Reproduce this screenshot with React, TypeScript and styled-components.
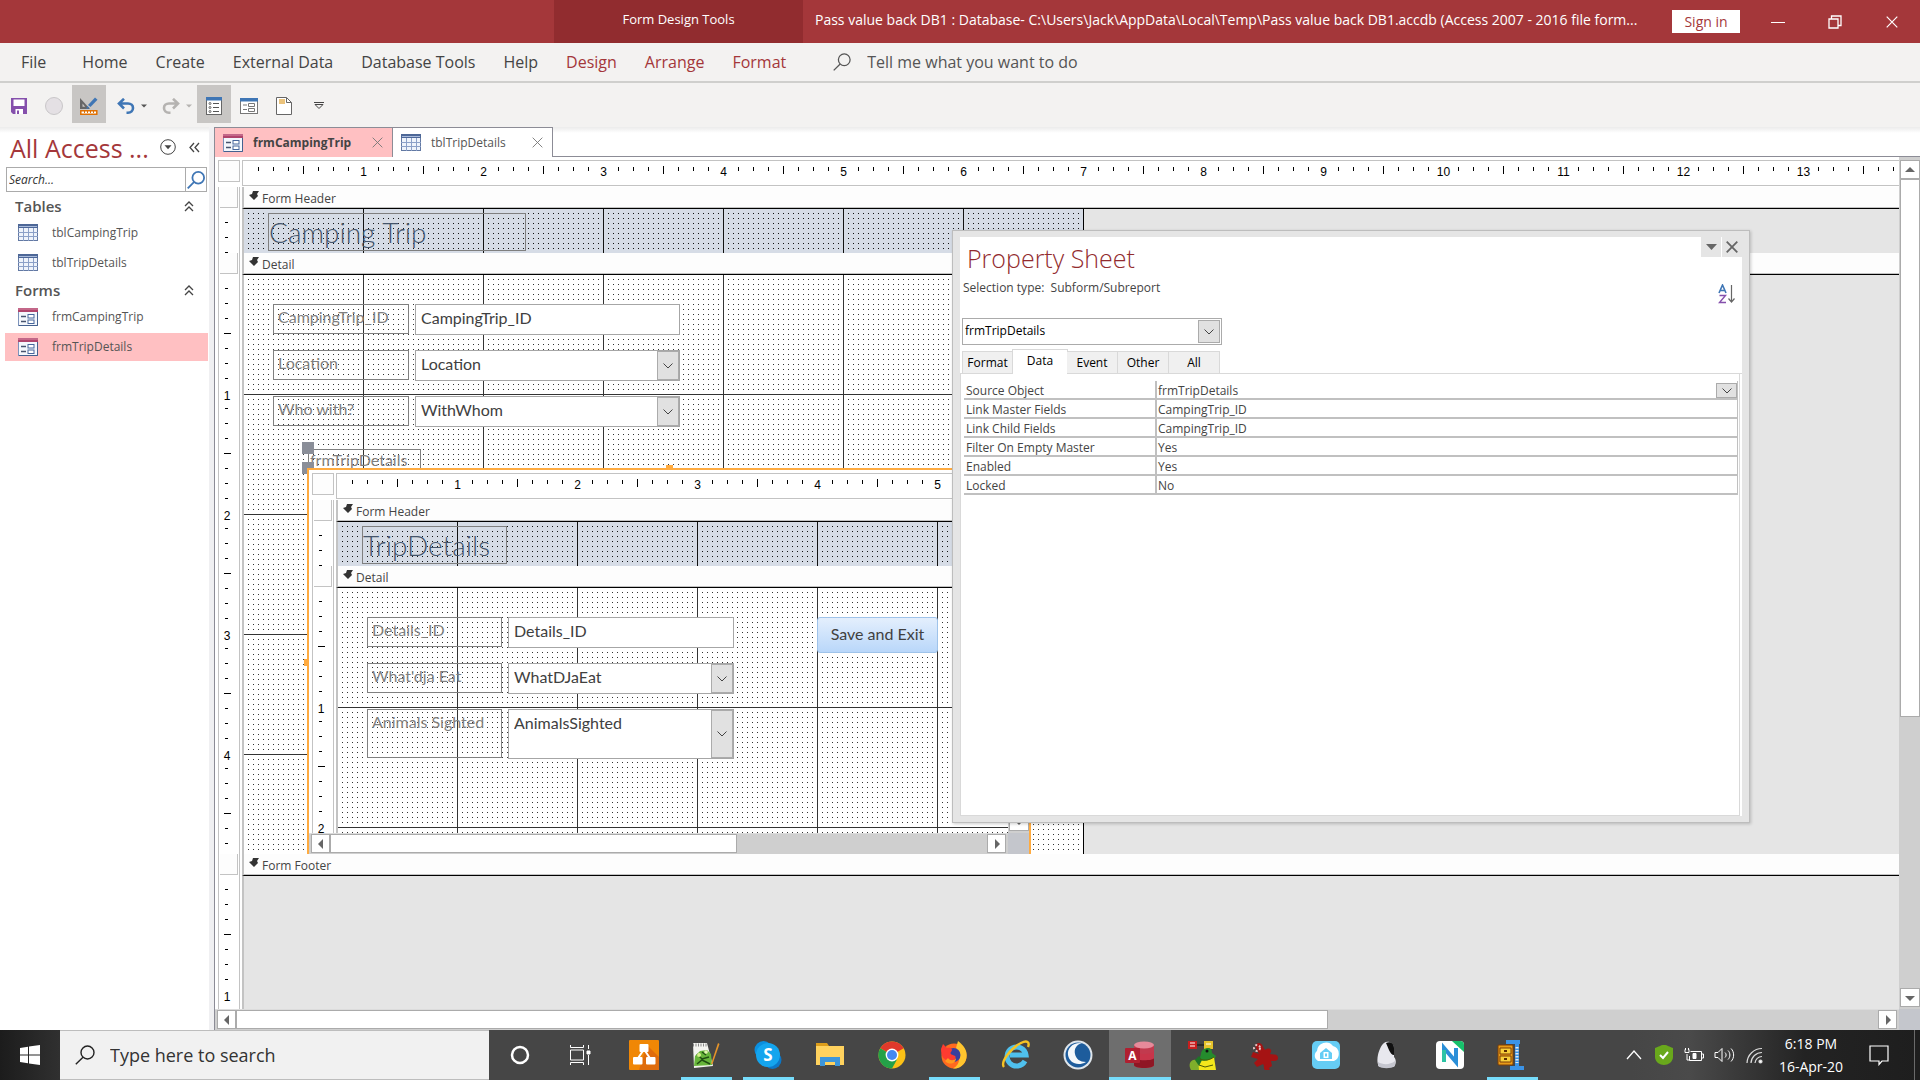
import React from 'react';
import styled, { createGlobalStyle, css } from 'styled-components';

const ui = `"Open Sans", "Noto Sans", sans-serif`;
const formFont = `Lato, "Open Sans", sans-serif`;
const red = '#a4373a';
const pink = '#ffc0c2';
const line = '#c3c3c3';
const frame = '#8c8c96';

const GlobalStyle = createGlobalStyle`
  *, *::before, *::after { box-sizing: border-box; }
  body { margin: 0; font-family: ${ui}; font-size: 12px; color: #444; background: #fff; }
  button, input, select { font: inherit; color: inherit; margin: 0; padding: 0; border: 0; background: none; border-radius: 0; outline: 0; }
  svg { display: block; flex: none; }
  h1, h2, ul { margin: 0; padding: 0; font-weight: 400; list-style: none; }
`;

const Shell = styled.div`
  min-height: 100vh;
  display: flex;
  flex-direction: column;
`;

/* ---------- title bar ---------- */
const TitleBar = styled.header`
  height: 43px;
  display: flex;
  align-items: stretch;
  background: ${red};
  color: #fff;
`;
const TitleSpace = styled.div`
  flex: 0 1 554px;
`;
const ContextTab = styled.div`
  flex: 0 0 249px;
  background: #912c2f;
  font-size: 13px;
  line-height: 38px;
  text-align: center;
`;
const WindowTitle = styled.h1`
  flex: 1;
  min-width: 0;
  padding: 0 12px;
  font-size: 14px;
  line-height: 40px;
  white-space: nowrap;
  overflow: hidden;
`;
const SignIn = styled.button`
  align-self: center;
  width: 68px;
  height: 23px;
  margin-right: 9px;
  background: #fff;
  color: ${red};
  font-size: 14px;
  line-height: 23px;
`;
const WindowButton = styled.button`
  width: 57px;
  display: grid;
  place-items: center;
`;

/* ---------- ribbon ---------- */
const RibbonTabs = styled.nav`
  height: 40px;
  display: flex;
  align-items: center;
  padding: 0 7px;
  background: #f3f2f1;
  border-bottom: 2px solid #cfcfcd;
`;
const RibbonTab = styled.button<{ $context?: boolean; $file?: boolean }>`
  padding: 0 14px;
  margin-right: ${p => (p.$file ? 8 : 0)}px;
  font-size: 16px;
  line-height: 36px;
  white-space: nowrap;
  color: ${p => (p.$context ? red : '#444')};
`;
const TellMe = styled.label`
  display: flex;
  align-items: center;
  gap: 16px;
  flex: 1;
  margin-left: 33px;
  color: #555;
  font-size: 16px;
  input { flex: 1; height: 36px; }
  input::placeholder { color: #555; opacity: 1; }
`;
const QuickBar = styled.div`
  height: 44px;
  display: flex;
  align-items: flex-start;
  gap: 1px;
  padding: 2px;
  background: #f3f2f1;
`;
const QuickButton = styled.button<{ $on?: boolean; $wide?: boolean }>`
  width: ${p => (p.$wide ? 44 : 34)}px;
  height: 38px;
  display: flex;
  align-items: center;
  justify-content: center;
  gap: 6px;
  padding: 4px 0 0 ${p => (p.$wide ? 6 : 0)}px;
  background: ${p => (p.$on ? '#c8c6c4' : 'transparent')};
`;

/* ---------- body ---------- */
const Body = styled.div`
  position: relative;
  flex: 1;
  display: flex;
  background: linear-gradient(#ebebeb, #fff 6px);
`;
const NavPane = styled.aside`
  flex: 0 0 215px;
  border-right: 1px solid ${frame};
  box-shadow: inset -5px 0 0 #f0f0f2;
  padding-right: 6px;
`;
const NavHead = styled.div`
  height: 40px;
  display: flex;
  align-items: center;
  padding: 0 1px 0 10px;
  h2 { flex: 1; font-size: 25px; line-height: 32px; color: ${red}; padding-top: 2px; }
`;
const IconButton = styled.button`
  display: grid;
  place-items: center;
  width: 26px;
  height: 26px;
`;
const NavSearch = styled.div`
  display: flex;
  height: 25px;
  margin: 0 1px 3px 6px;
  border: 1px solid #ababab;
  input { flex: 1; min-width: 0; padding: 0 2px; font-style: italic; }
  input::placeholder { color: #333; opacity: 1; }
  button { width: 21px; border-left: 1px solid #ababab; display: grid; place-items: center; }
`;
const NavGroup = styled.button`
  display: flex;
  align-items: center;
  justify-content: space-between;
  width: 100%;
  height: 22px;
  padding: 0 14px 0 15px;
  font-size: 15px;
  font-weight: 600;
  color: #555;
`;
const NavItem = styled.a<{ $on?: boolean }>`
  display: flex;
  align-items: center;
  gap: 14px;
  height: 28px;
  margin: 2px 0 2px 5px;
  padding: 0 0 1px 13px;
  color: #555;
  text-decoration: none;
  background: ${p => (p.$on ? pink : 'transparent')};
`;

const Main = styled.main`
  flex: 1;
  min-width: 0;
  display: flex;
  flex-direction: column;
`;
const DocTabs = styled.div`
  display: flex;
  height: 30px;
`;
const DocTab = styled.div<{ $on?: boolean }>`
  display: flex;
  align-items: center;
  width: ${p => (p.$on ? 178 : 160)}px;
  padding: 0 8px;
  background: ${p => (p.$on ? pink : '#fff')};
  border-top: 1px solid ${frame};
  border-right: 1px solid ${frame};
  font-weight: ${p => (p.$on ? 700 : 400)};
  color: ${p => (p.$on ? '#444' : '#555')};
  span { flex: 1; padding-left: 10px; }
  button { width: 14px; height: 14px; display: grid; place-items: center; }
`;
const DocTabsRest = styled.div`
  flex: 1;
  border-bottom: 1px solid ${frame};
`;

/* ---------- design surface ---------- */
const Workspace = styled.div`
  flex: 1;
  min-height: 0;
  display: grid;
  grid-template-columns: minmax(0, 1fr) 21px;
  grid-template-rows: minmax(0, 1fr) 21px;
  background: #fff;
`;
const Surface = styled.div`
  display: flex;
  flex-direction: column;
  padding: 3px 0 0 3px;
  min-width: 0;
`;
const RulerRow = styled.div`
  display: flex;
  height: 27px;
`;
const Corner = styled.div`
  width: 22px;
  height: 22px;
  margin-right: 2px;
  flex: none;
  border: 1px solid ${line};
  background: #fdfdfd;
`;
const HRuler = styled.div`
  flex: 1;
  height: 26px;
  display: flex;
  padding-left: 8px;
  border: solid ${line};
  border-width: 1px 0 1px 1px;
  overflow: hidden;
  color: #000;
`;
const HTick = styled.i<{ $long: boolean }>`
  flex: 0 0 1px;
  height: ${p => (p.$long ? 8 : 4)}px;
  margin: ${p => (p.$long ? 5 : 6)}px 7px 0;
  background: #000;
`;
const HNumber = styled.span`
  flex: 0 0 15px;
  padding-top: 4px;
  text-align: center;
  font: 12px/14px "Liberation Sans", sans-serif;
`;
const SectionRow = styled.div<{ $grow?: boolean }>`
  display: flex;
  flex: ${p => (p.$grow ? '1 1 0' : '0 0 auto')};
  min-height: 0;
`;
const Gutter = styled.div`
  flex: 0 0 22px;
  contain: size;
  overflow: hidden;
  margin-right: 2px;
  border: solid ${line};
  border-width: 0 1px;
  color: #000;
`;
const VTicks = styled.div`
  display: flex;
  flex-direction: column;
  padding-top: 6px;
`;
const VTick = styled.i<{ $long: boolean }>`
  flex: 0 0 1px;
  width: ${p => (p.$long ? 7 : 3)}px;
  margin: 7px 0 7px ${p => (p.$long ? 5 : 6)}px;
  background: #000;
`;
const VNumber = styled.span`
  flex: 0 0 15px;
  min-height: 0;
  width: 16px;
  text-align: center;
  font: 12px/21px "Liberation Sans", sans-serif;
`;
const Selector = styled.button`
  display: block;
  width: 18px;
  height: 21px;
  margin-left: 1px;
  border: solid ${line};
  border-width: 0 1px 1px 0;
  background: #fdfdfd;
`;
const SectionBar = styled.div`
  flex: 1;
  display: flex;
  height: 22px;
  gap: 3px;
  padding: 4px 5px 0;
  border-left: 2px solid ${line};
  border-bottom: 1px solid #000;
  box-shadow: inset 0 -1px 0 ${line};
  background: #fdfdfd;
  line-height: 16px;
`;
const Canvas = styled.div`
  flex: 1;
  min-width: 0;
  overflow: hidden;
  border-left: 2px solid ${line};
  background: #e5e5e5;
`;
const Page = styled.div<{ $height: number; $header?: boolean }>`
  ${p => {
    const paper = p.$header ? '#d6dce6' : '#fff';
    const ink = p.$header ? '#111' : '#333';
    return css`
      background:
        linear-gradient(90deg, ${ink} 1px, transparent 1px) -1px -1px / 120px 120px,
        linear-gradient(${ink} 1px, transparent 1px) -1px -1px / 120px 120px,
        linear-gradient(transparent 1px, ${paper} 1px) -1px -1px / 5px 5px,
        linear-gradient(90deg, ${ink} 1px, ${paper} 1px) -1px -1px / 5px 5px;
    `;
  }}
  position: relative;
  width: 840px;
  height: ${p => p.$height}px;
  border-right: 1px solid #000;
`;

type Box = { $x: number; $y: number; $w: number; $h: number };
const placed = css<Box>`
  position: absolute;
  left: ${p => p.$x}px;
  top: ${p => p.$y}px;
  width: ${p => p.$w}px;
  height: ${p => p.$h}px;
`;
const FormTitle = styled.h2<Box>`
  ${placed}
  border: 1px solid #7f7f7f;
  color: #44546a;
  font: 300 28px/36px ${formFont};
  white-space: nowrap;
`;
const FieldLabel = styled.label<Box & { $tight?: boolean }>`
  ${placed}
  padding-left: ${p => (p.$tight ? 1 : 4)}px;
  border: 1px solid #7f7f7f;
  color: #7f7f7f;
  font: 16px/${p => (p.$tight ? 20 : 24)}px ${formFont};
  white-space: nowrap;
`;
const FieldBox = styled.div<Box>`
  ${placed}
  display: flex;
  border: 1px solid #a6a6a6;
  background: #fff;
  color: #404040;
  font: 16px/20px ${formFont};
  input, select { appearance: none; flex: 1; min-width: 0; height: 26px; padding: 0 5px; }
  input { padding-bottom: 1px; }
`;
const DropArrow = styled.span`
  flex: 0 0 22px;
  display: grid;
  place-items: center;
  background: #e1e1e1;
  border: 1px solid #ababab;
  pointer-events: none;
`;
const CommandButton = styled.button<Box>`
  ${placed}
  padding-bottom: 2px;
  border: 1px solid #9fc3ea;
  border-radius: 3px;
  background: linear-gradient(#e4effd, #b9d7fa);
  color: #404040;
  font: 16px/30px ${formFont};
`;
const SubformFrame = styled.div<Box>`
  ${placed}
  display: flex;
  flex-direction: column;
  border: 2px solid #ffab40;
  border-bottom: 0;
`;
const Handle = styled.i<Box & { $gray?: boolean }>`
  ${placed}
  background: ${p => (p.$gray ? '#8a8e98' : '#ffab40')};
`;

/* ---------- scroll bars ---------- */
const ScrollBar = styled.div<{ $vertical?: boolean }>`
  display: flex;
  flex-direction: ${p => (p.$vertical ? 'column' : 'row')};
  padding: ${p => (p.$vertical ? '3px 0 2px 1px' : '0 2px 1px')};
  background: #cfcfcf;
  border: solid #dcdcdc;
  border-width: ${p => (p.$vertical ? '0' : '1px 0 0')};
`;
const ScrollButton = styled.button`
  flex: 0 0 19px;
  min-height: 18px;
  display: grid;
  place-items: center;
  background: #fff;
  border: 1px solid #ababab;
`;
const ScrollTrack = styled.div<{ $vertical?: boolean; $size: number }>`
  flex: 1;
  min-height: 0;
  > div {
    width: ${p => (p.$vertical ? '100%' : p.$size + '%')};
    height: ${p => (p.$vertical ? p.$size + '%' : '100%')};
    background: #fff;
    border: 1px solid #ababab;
  }
`;
const ScrollCorner = styled.div`
  background: #c4c6cc;
`;

/* ---------- property sheet ---------- */
const Sheet = styled.section`
  position: absolute;
  left: 952px;
  top: 103px;
  width: 798px;
  height: 593px;
  padding: 6px 7px;
  display: flex;
  border: 1px solid #bdbdbd;
  background: #e5e5e5;
  box-shadow: 1px 1px 3px #0003;
`;
const SheetBody = styled.div`
  flex: 1;
  display: flex;
  flex-direction: column;
  background: #fff;
`;
const SheetHead = styled.div`
  display: flex;
  height: 40px;
  padding-left: 7px;
  gap: 1px;
  h2 { flex: 1; font-size: 25px; font-weight: 300; line-height: 42px; color: #922b2e; }
  button { width: 20px; height: 20px; display: grid; place-items: center; background: #e5e5e5; }
`;
const SheetType = styled.div`
  display: flex;
  justify-content: space-between;
  height: 40px;
  padding: 1px 6px 0 3px;
  line-height: 20px;
  white-space: pre;
  button { height: 20px; margin-top: 6px; }
`;
const SheetSelect = styled.div`
  display: flex;
  flex: none;
  width: 260px;
  height: 27px;
  margin: 1px 0 4px 2px;
  padding: 1px;
  border: 1px solid #ababab;
  color: #000;
  select { appearance: none; flex: 1; padding: 0 1px 2px; }
`;
const SheetTabs = styled.div`
  display: flex;
  align-items: flex-end;
  flex: none;
  height: 25px;
  padding-left: 2px;
  border-bottom: 1px solid #d9d9d9;
`;
const SheetTab = styled.button<{ $on?: boolean }>`
  width: ${p => (p.$on ? 56 : 51)}px;
  height: ${p => (p.$on ? 25 : 22)}px;
  margin: ${p => (p.$on ? '0 -1px -1px' : '0')};
  padding-bottom: ${p => (p.$on ? 3 : 0)}px;
  border: 1px solid #d9d9d9;
  border-width: ${p => (p.$on ? '1px 1px 0' : '1px 1px 0 0')};
  background: ${p => (p.$on ? '#fff' : '#f0f0f0')};
  color: #000;
  position: relative;
  &:first-child { border-left-width: 1px; }
`;
const SheetPanel = styled.div`
  flex: 1;
  margin-right: 2px;
  padding: 7px 1px 0 3px;
  border: 1px solid #d9d9d9;
  border-top: 0;
`;
const PropTable = styled.table`
  width: 100%;
  border-collapse: separate;
  border-spacing: 0;
  border-right: 1px solid #c0c0c0;
  line-height: 15px;
  th, td { height: 19px; padding: 2px 0 0 2px; text-align: left; font-weight: 400; border-bottom: 2px solid #c0c0c0; }
  th { width: 193px; border-right: 2px solid #c0c0c0; }
  td { padding-left: 1px; }
  td > div { display: flex; justify-content: space-between; }
`;
const CellDrop = styled.button`
  width: 21px;
  height: 15px;
  display: grid;
  place-items: center;
  background: #e1e1e1;
  border: 1px solid #ababab;
`;

/* ---------- task bar ---------- */
const TaskBar = styled.footer`
  height: 50px;
  display: flex;
  background: linear-gradient(90deg, #464646 85%, #4a4a4a 88%, #232323 94%, #1e1e1e);
  color: #fff;
`;
const Start = styled.button`
  width: 60px;
  display: grid;
  place-items: center;
  background: linear-gradient(90deg, #1c1c1c, #303030);
`;
const TaskSearch = styled.label`
  flex: 0 0 429px;
  display: flex;
  align-items: center;
  gap: 15px;
  padding-left: 15px;
  background: #f1f1f1;
  border: solid #bdbdbd;
  border-width: 1px 0;
  color: #222;
  font-size: 18px;
  input { flex: 1; height: 40px; }
  input::placeholder { color: #333; opacity: 1; }
`;
const TaskButton = styled.button<{ $running?: boolean; $active?: boolean }>`
  position: relative;
  flex: 0 0 62px;
  display: grid;
  place-items: center;
  background: ${p => (p.$active ? '#6e6e6e' : 'transparent')};
  &::after {
    content: '';
    display: ${p => (p.$running || p.$active ? 'block' : 'none')};
    position: absolute;
    bottom: 0;
    left: ${p => (p.$active ? 0 : 6)}px;
    right: ${p => (p.$active ? 0 : 5)}px;
    height: 3px;
    background: #76dcfb;
  }
`;
const Tray = styled.div`
  margin-left: auto;
  display: flex;
  align-items: center;
  padding-right: 5px;
`;
const TrayButton = styled.button`
  width: 30px;
  height: 50px;
  display: grid;
  place-items: center;
`;
const Clock = styled.time`
  width: 84px;
  text-align: center;
  font-size: 14px;
  line-height: 23px;
  white-space: pre-line;
`;
const NoticeButton = styled(TrayButton)`
  width: 61px;
  padding-right: 9px;
`;
const PeekEdge = styled.div`
  width: 1px;
  align-self: stretch;
  background: #6a6a6a;
`;

/* ---------- small drawings ---------- */
const Caret = ({ fill = '#555' }) => (
  <svg width="6" height="4" viewBox="0 0 8 4"><path d="M0 0h8L4 4z" fill={fill} /></svg>
);
const Chevron = () => (
  <svg width="10" height="6" viewBox="0 0 10 6" fill="none" stroke="#444"><path d="M.5.5 5 5 9.500.5" /></svg>
);
const Triangle = ({ turn = 0 }) => (
  <svg width="10" height="10" viewBox="0 0 10 10"><path d="M0 7h10L5 2z" fill="#666" transform={`rotate(${turn} 5 5)`} /></svg>
);
const Cross = ({ size = 12, color = '#777', w = 1 }) => (
  <svg width={size} height={size} viewBox="0 0 12 12" fill="none" stroke={color} strokeWidth={w}><path d="m.7.7 10.600 10.600M11.300.7.7 11.300" /></svg>
);
const Lens = ({ size = 20, color = '#444', w = 1.4 }) => (
  <svg width={size} height={size} viewBox="0 0 20 20" fill="none" stroke={color} strokeWidth={w}><circle cx="12.500" cy="7.500" r="6.500" /><path d="M8 12.200.8 19.300" /></svg>
);
const FormGlyph = () => (
  <svg width="20" height="18" viewBox="0 0 20 18">
    <rect x=".5" y=".5" width="19" height="17" fill="#f4f7fc" stroke="#7d93bb" />
    <path d="M19.500 3v14.500H1" fill="none" stroke="#44618f" />
    <rect width="20" height="4" fill="#b0446c" /><path d="M0 1h20" stroke="#d78ba6" />
    <path d="M3 8.500h5M3 13.500h5" stroke="#46536e" strokeWidth="1.500" />
    <rect x="10" y="6.500" width="6" height="3.500" fill="#fff" stroke="#46669c" /><rect x="10" y="12" width="6" height="3.500" fill="#fff" stroke="#46669c" />
  </svg>
);
const TableGlyph = () => (
  <svg width="20" height="17" viewBox="0 0 20 17">
    <rect x=".5" y=".5" width="19" height="16" fill="#eef3fb" stroke="#6379a3" />
    <rect width="20" height="4" fill="#4d6797" /><path d="M1 2.500h18" stroke="#a9bbdc" />
    <path d="M0 8.500h20M0 12.500h20M5.500 4v13M10.500 4v13M15.500 4v13" stroke="#8ba0c8" />
  </svg>
);
const DoubleUp = () => (
  <svg width="10" height="11" viewBox="0 0 10 11" fill="none" stroke="#444" strokeWidth="1.300"><path d="M1 5l4-4 4 4M1 10l4-4 4 4" /></svg>
);
const Marker = () => (
  <svg width="10" height="9" viewBox="0 0 10 9"><path d="M4 0h6L8 3l1 2-4 4-5-5 3-1z" fill="#333" /></svg>
);

const SaveIcon = () => (
  <svg width="16" height="16" viewBox="0 0 16 16"><path d="M0 0h16v16H2l-2-2z" fill="#8550ac" /><path d="M2.500 1.500h11V8h-11zM4.500 11h7.500v5H4.500z" fill="#fff" /><path d="M6 12.500h2V16H6z" fill="#8550ac" /></svg>
);
const CircleIcon = () => (
  <svg width="18" height="18" viewBox="0 0 18 18"><circle cx="9" cy="9" r="8.500" fill="#e4e0e4" stroke="#c8c6c8" /></svg>
);
const DesignIcon = () => (
  <svg width="18" height="18" viewBox="0 0 18 18">
    <path d="M0 1v11h10z" fill="#666" /><path d="M2.500 6.500v3.200h2.700z" fill="#c8c6c4" />
    <path d="m8 8 7-7.500 2.500 2.200L10.500 10z" fill="#3f76b5" /><path d="m7.300 9 2.300 2-3.300 1z" fill="#3f76b5" />
    <path d="M.8 13.800h16v3.500H.8z" fill="#fff" stroke="#e07000" strokeWidth="1.500" /><path d="M4.500 14v2M7.500 14v2M10.500 14v2M13.500 14v2" stroke="#e07000" />
  </svg>
);
const UndoIcon = ({ flip = false, color = '#3f76b5' }) => (
  <svg width="18" height="16" viewBox="0 0 18 16" fill="none" stroke={color} strokeWidth="2.600">
    <g transform={flip ? 'translate(18 0) scale(-1 1)' : undefined}><path d="M7 .8 2 5.500 7 10.500M2.500 5.500H11c3 0 5 2 5 4.500s-2 4.700-5 4.700H9.500" /></g>
  </svg>
);
const PropIcon = () => (
  <svg width="16" height="18" viewBox="0 0 16 18"><rect x=".5" y=".5" width="15" height="17" fill="#fff" stroke="#666" /><path d="M0 0h16v3.500H0z" fill="#3f76b5" />
    <path d="M7 6.500h6M7 10.500h6M7 14.500h6" stroke="#555" /><g fill="none" stroke="#666"><circle cx="4" cy="6.500" r="1" /><circle cx="4" cy="10.500" r="1" /><circle cx="4" cy="14.500" r="1" /></g></svg>
);
const FormViewIcon = () => (
  <svg width="18" height="16" viewBox="0 0 18 16"><rect x=".5" y=".5" width="17" height="15" fill="#fff" stroke="#777" /><path d="M0 0h18v3.500H0z" fill="#3f76b5" />
    <path d="M3 7h4M3 11.500h4" stroke="#777" /><path d="M8.500 5.500h6v3h-6zM8.500 10.500h6v3h-6z" fill="none" stroke="#777" /></svg>
);
const PageIcon = () => (
  <svg width="16" height="18" viewBox="0 0 16 18"><path d="M.5.5h10l5 5v12H.5z" fill="#fff" stroke="#666" /><path d="M3 2h6v5H3z" fill="#ebc37c" /><path d="M10.500.5v5h5" fill="none" stroke="#666" /></svg>
);

/* 30 x 30 task bar pictures */
const pictures: Record<string, React.ReactNode> = {
  Cortana: <circle cx="15" cy="15" r="8" fill="none" stroke="#fff" strokeWidth="2.500" />,
  'Task View': <g fill="none" stroke="#fff"><path d="M3.500 10h13v10h-13zM3.500 5v2.500h13V5M3.500 25v-2.500h13V25M21.500 5v4M21.500 15v10" /><path d="M20 11h3v3h-3z" fill="#fff" /></g>,
  'draw.io': <g><rect width="30" height="30" rx="1" fill="#f08705" /><path d="M18 5l12 12v13H10z" fill="#df6c0c" /><path d="m14.500 10-6 9m7-9 6 9" stroke="#fff" strokeWidth="2" /><g fill="#fff"><rect x="10.500" y="4" width="9" height="8" rx="1" /><rect x="4" y="17" width="9.500" height="7.500" rx="1" /><rect x="17" y="17" width="9.500" height="7.500" rx="1" /></g></g>,
  'Notepad++': <g><path d="M2 3h14l6 23-19 2z" fill="#f4f4f0" /><path d="M2 5h14" stroke="#888" strokeWidth="3" strokeDasharray="1 1.500" /><path d="M3 26l1-10 5-5 7-1 4 4 1 11z" fill="#67b53a" /><path d="M6 14l5 5 7-2M6 24l5-4 8 4M11 12l4 3" stroke="#204d12" strokeWidth="1.500" fill="none" /><circle cx="8" cy="15" r="2" fill="#d5f08c" /><circle cx="15" cy="12" r="1.800" fill="#e4f5b0" /><path d="m20 24 7-21 1.500 1-7 20z" fill="#e69429" /></g>,
  Skype: <g><circle cx="10.500" cy="10" r="9" fill="#0a8fdf" /><circle cx="19.500" cy="20" r="9" fill="#0c77c7" /><circle cx="15" cy="15" r="12" fill="#14a5ee" /><text x="15" y="21" textAnchor="middle" fill="#fff" fontSize="17" fontWeight="700" fontFamily="Open Sans">S</text></g>,
  'File Explorer': <g><path d="M1 3h11l2 3H1z" fill="#dc9d1b" /><path d="M1 6h28v19H1z" fill="#ffd25e" /><path d="M5 17h20v9h-5v-4h-10v4H5z" fill="#3d96da" /></g>,
  Chrome: <g><circle cx="15" cy="15" r="13.500" fill="#fbc116" /><path d="M15 15 3.300 8.200A13.500 13.500 0 0 1 26.700 8.200z" fill="#e0392b" /><path d="M15 15 3.300 8.200A13.500 13.500 0 0 0 15 28.500l5-9z" fill="#24a148" /><circle cx="15" cy="15" r="6.400" fill="#fff" /><circle cx="15" cy="15" r="5" fill="#4688f1" /></g>,
  Firefox: <g><circle cx="15" cy="16" r="12.500" fill="#ff6a1f" /><path d="M19 1c5 4 10 9 8.500 17S19 29 14 28.500C22 25 22 13 17 8z" fill="#ffc52e" /><circle cx="14.500" cy="15" r="7" fill="#3a3f9e" /><path d="M2 9 4 4l4 4c5-1 6 2 4 4s2 3 4 4-1 6-6 5S2 17 2 9z" fill="#ff3b30" /><path d="M9 18c2 3 6 3 8 0 0 5-6 8-11 3z" fill="#ff9a1f" /></g>,
  'Internet Explorer': <g><path d="M24 21a9.500 9.500 0 1 1 1-6H9" fill="none" stroke="#4fc1ee" strokeWidth="5" /><path d="M3 27C-1 22 10 8 20 3c6-3 9-1 7 4" fill="none" stroke="#f5c324" strokeWidth="2.400" /></g>,
  Browser: <g><circle cx="15" cy="15" r="14.500" fill="#dfe6ec" /><circle cx="15" cy="15" r="12.500" fill="#1d5c9c" /><path d="M19 3C10 2 4 8 5 15s9 12 18 7c-6 0-10-3-11-8S13 5 19 3z" fill="#f4f8fb" /></g>,
  Access: <g><path d="M9 5v20c0 4 20 4 20 0V5z" fill="#c23a4e" /><path d="M9 18v7c0 4 20 4 20 0v-7c0 3-20 3-20 0z" fill="#8f1624" /><ellipse cx="19" cy="5" rx="10" ry="3.500" fill="#e78a9a" /><path d="M9 11c0 4 20 4 20 0v6c0 4-20 4-20 0z" fill="#c8354a" /><rect x="0" y="8" width="15" height="15" rx="1" fill="#b01f30" /><text x="7.500" y="20" textAnchor="middle" fill="#fff" fontSize="12" fontWeight="700" fontFamily="Open Sans">A</text></g>,
  Frog: <g><path d="M1 1h9v8H1z" fill="#c81e1e" /><path d="M17 1h9v8h-9z" fill="#e6c32c" /><path d="M3 3h5M3 6h5M19 4h5" stroke="#fff" /><path d="M10 5h7" stroke="#111" /><path d="M14 14c0-4 4-6 7-6s4 2 4 5l4 3-3 5H12z" fill="#258b2d" /><path d="M4 30c-4-6 1-13 7-9l3 9z" fill="#7fae2b" /><path d="M11 19c5 3 11 2 16-2l2 13H12z" fill="#f3e71c" /><path d="M8 20l4-4 3 4-3 6z" fill="#1d7426" /><path d="M13 19c5 2 10 1 14-2M12 25l6 2 8-2" stroke="#4a5a08" fill="none" /><circle cx="20" cy="11" r="1.500" fill="#111" /></g>,
  Puzzle: <g><path d="M7 8c-2-6 6-7 7-1l2 3c4-3 7-1 6 2l-1 2c2 1 8-1 8 4 0 4-6 3-7 3l1 5-3 2 1 2c-3 3-7 0-6-4l-1-2-6 3-3-4 4-4-7-2 2-5 6 2z" fill="#a51313" /><circle cx="8" cy="8" r="3" fill="none" stroke="#e8c4c4" strokeWidth="2" strokeDasharray="2 2" /></g>,
  Cloud: <g><rect x="1" y="1" width="28" height="28" rx="5" fill="#66cdf5" /><path d="M7 21a6 6 0 0 1-1-10 9 9 0 0 1 16-5 8 8 0 0 1 1 15z" fill="#fff" /><path d="m9 13 6-5 6 5v6H9z" fill="#66cdf5" /><path d="M12.500 12h5v6h-5z" fill="#fff" /><path d="M14 13.500h2v3h-2z" fill="#66cdf5" /></g>,
  Camera: <g><path d="M7 27C2 24 5 8 11 3c4-3 10 0 10 5v9c3 3 2 9-1 10z" fill="#e8e8ee" /><path d="M13 3c5-2 8 1 8 5v7c-4 0-6-8-8-12z" fill="#111" /><path d="M5 22c5 3 12 3 17-1v5c-4 3-13 3-17 0z" fill="#c5c6cf" /></g>,
  Nox: <g><rect x="1" y="1" width="28" height="28" rx="4" fill="#fff" /><path d="M17 1h8a4 4 0 0 1 4 4v7z" fill="#17c06b" /><path d="M9 22V8l12 14V8" fill="none" stroke="#2a8fd8" strokeWidth="4" /><path d="M9 22V10" stroke="#2dc4a5" strokeWidth="4" /></g>,
  Archive: <g><rect x="1" y="5" width="15" height="20" rx="1" fill="#e89b18" stroke="#7a3c06" /><path d="M3 8h11v6H3zM3 16h11v6H3z" fill="#f8cf3b" stroke="#7a3c06" /><path d="M7 11h3M7 19h3" stroke="#5a2c00" strokeWidth="2" /><path d="M9 2h14M13 28h14M20 3v24" stroke="#3b93e6" strokeWidth="4" /><path d="M20 7v16" stroke="#dfe8f2" strokeWidth="3" strokeDasharray="1.500 1.500" /></g>,
};
const running = ['Notepad++', 'Skype', 'Firefox', 'Archive'];

/* ---------- composed parts ---------- */
const range = (count: number) => Array.from({ length: count }, (_, i) => i + 1);

type SectionProps = { title: string; ticks: number; height?: number; header?: boolean; grow?: boolean; children?: React.ReactNode };
const Section = ({ title, ticks, height, header, grow, children }: SectionProps) => (
  <>
    <SectionRow>
      <Gutter><Selector aria-label={`Select ${title}`} /></Gutter>
      <SectionBar><Marker />{title}</SectionBar>
    </SectionRow>
    <SectionRow $grow={grow}>
      <Gutter>
        <VTicks aria-hidden="true">
          {range(ticks).map(k =>
            k % 8 === 0 ? <VNumber key={k}>{k / 8}</VNumber> : <VTick key={k} $long={k % 8 === 4} />)}
        </VTicks>
      </Gutter>
      <Canvas>{height ? <Page $height={height} $header={header}>{children}</Page> : null}</Canvas>
    </SectionRow>
  </>
);

const Scroll = ({ vertical, size }: { vertical?: boolean; size: number }) => (
  <ScrollBar $vertical={vertical}>
    <ScrollButton aria-label={vertical ? 'Scroll up' : 'Scroll left'}><Triangle turn={vertical ? 0 : -90} /></ScrollButton>
    <ScrollTrack $vertical={vertical} $size={size}><div /></ScrollTrack>
    <ScrollButton aria-label={vertical ? 'Scroll down' : 'Scroll right'}><Triangle turn={vertical ? 180 : 90} /></ScrollButton>
  </ScrollBar>
);

const Designer = ({ h, v, ticks, children }: { h: number; v: number; ticks: number; children: React.ReactNode }) => (
  <Workspace>
    <Surface>
      <RulerRow>
        <Corner />
        <HRuler aria-hidden="true">
          {range(ticks).map(k =>
            k % 8 === 0 ? <HNumber key={k}>{k / 8}</HNumber> : <HTick key={k} $long={k % 8 === 4} />)}
        </HRuler>
      </RulerRow>
      {children}
    </Surface>
    <Scroll vertical size={v} />
    <Scroll size={h} />
    <ScrollCorner />
  </Workspace>
);

type FieldProps = { id: string; label: string; value: string; y: number; labelW: number; x: number; w: number; tall?: boolean; combo?: boolean };
const Field = ({ id, label, value, y, labelW, x, w, tall, combo }: FieldProps) => (
  <>
    <FieldLabel htmlFor={id} $x={29} $y={y} $w={labelW} $h={tall ? 49 : 30}>{label}</FieldLabel>
    <FieldBox $x={x} $y={y} $w={w} $h={tall ? 50 : 31}>
      {combo
        ? <><select id={id}><option>{value}</option></select><DropArrow><Chevron /></DropArrow></>
        : <input id={id} defaultValue={value} />}
    </FieldBox>
  </>
);

const ribbon = ['File', 'Home', 'Create', 'External Data', 'Database Tools', 'Help', 'Design', 'Arrange', 'Format'];
const properties = [
  ['Source Object', 'frmTripDetails'],
  ['Link Master Fields', 'CampingTrip_ID'],
  ['Link Child Fields', 'CampingTrip_ID'],
  ['Filter On Empty Master', 'Yes'],
  ['Enabled', 'Yes'],
  ['Locked', 'No'],
];

const Subform = () => (
  <SubformFrame $x={63} $y={193} $w={724} $h={386}>
    <Designer h={62} v={60} ticks={44}>
      <Section title="Form Header" ticks={3} height={44} header>
        <FormTitle $x={24} $y={4} $w={145} $h={38}>TripDetails</FormTitle>
      </Section>
      <Section title="Detail" ticks={16} height={245} grow>
        <Field id="details" label="Details_ID" value="Details_ID" y={29} labelW={135} x={170} w={226} />
        <Field id="eat" label="What'dja Eat" value="WhatDJaEat" y={75} labelW={135} x={170} w={226} combo />
        <Field id="animals" label="Animals Sighted" value="AnimalsSighted" y={121} labelW={135} x={170} w={226} combo tall />
        <CommandButton $x={479} $y={29} $w={121} $h={36}>Save and Exit</CommandButton>
      </Section>
    </Designer>
  </SubformFrame>
);

const PropertySheet = () => (
  <Sheet aria-label="Property Sheet">
    <SheetBody>
      <SheetHead>
        <h2>Property Sheet</h2>
        <button aria-label="Task pane options"><svg width="11" height="6" viewBox="0 0 11 6"><path d="M0 0h11L5.500 6z" fill="#666" /></svg></button>
        <button aria-label="Close property sheet"><Cross w={1.8} color="#666" /></button>
      </SheetHead>
      <SheetType>
        <span>{'Selection type:  Subform/Subreport'}</span>
        <button aria-label="Sort A to Z">
          <svg width="18" height="20" viewBox="0 0 18 20" fill="none">
            <path d="M1 9 4.500 1 8 9M2.300 6.500h4.400" stroke="#3f76b5" strokeWidth="1.600" />
            <path d="M1.500 11.500h6L1.500 18.500h6.500" stroke="#8550ac" strokeWidth="1.400" />
            <path d="M13.500 1v17M10.500 14.500l3 3.500 3-3.500" stroke="#666" strokeWidth="1.200" />
          </svg>
        </button>
      </SheetType>
      <SheetSelect>
        <select aria-label="Selected object"><option>frmTripDetails</option></select>
        <DropArrow><Chevron /></DropArrow>
      </SheetSelect>
      <SheetTabs role="tablist">
        {['Format', 'Data', 'Event', 'Other', 'All'].map(t => (
          <SheetTab key={t} role="tab" aria-selected={t === 'Data'} $on={t === 'Data'}>{t}</SheetTab>
        ))}
      </SheetTabs>
      <SheetPanel>
        <PropTable>
          <tbody>
            {properties.map(([name, value], i) => (
              <tr key={name}>
                <th scope="row">{name}</th>
                <td><div>{value}{i === 0 && <CellDrop aria-label="Choose source object"><Chevron /></CellDrop>}</div></td>
              </tr>
            ))}
          </tbody>
        </PropTable>
      </SheetPanel>
    </SheetBody>
  </Sheet>
);

export default function App() {
  return (
    <Shell>
      <GlobalStyle />
      <TitleBar>
        <TitleSpace />
        <ContextTab>Form Design Tools</ContextTab>
        <WindowTitle>Pass value back DB1 : Database- C:\Users\Jack\AppData\Local\Temp\Pass value back DB1.accdb (Access 2007 - 2016 file form...</WindowTitle>
        <SignIn>Sign in</SignIn>
        <WindowButton aria-label="Minimize"><svg width="14" height="14" viewBox="0 0 14 14"><path d="M0 7.500h14" stroke="#fff" /></svg></WindowButton>
        <WindowButton aria-label="Restore"><svg width="14" height="14" viewBox="0 0 14 14" fill="none" stroke="#fff" strokeWidth="1.300"><path d="M1 4h9v9H1zM3.500 4V1H13v9.500h-3" /></svg></WindowButton>
        <WindowButton aria-label="Close"><Cross color="#fff" w={1.2} /></WindowButton>
      </TitleBar>

      <RibbonTabs aria-label="Ribbon">
        {ribbon.map((t, i) => <RibbonTab key={t} $file={i === 0} $context={i > 5}>{t}</RibbonTab>)}
        <TellMe><Lens size={18} color="#555" /><input aria-label="Tell me" placeholder="Tell me what you want to do" /></TellMe>
      </RibbonTabs>

      <QuickBar role="toolbar" aria-label="Quick access">
        <QuickButton aria-label="Save"><SaveIcon /></QuickButton>
        <QuickButton aria-label="Record"><CircleIcon /></QuickButton>
        <QuickButton aria-label="Design View" $on><DesignIcon /></QuickButton>
        <QuickButton aria-label="Undo" $wide><UndoIcon /><Caret /></QuickButton>
        <QuickButton aria-label="Redo" $wide><UndoIcon flip color="#b5b3b1" /><Caret fill="#b5b3b1" /></QuickButton>
        <QuickButton aria-label="Property Sheet" $on><PropIcon /></QuickButton>
        <QuickButton aria-label="Form View"><FormViewIcon /></QuickButton>
        <QuickButton aria-label="New"><PageIcon /></QuickButton>
        <QuickButton aria-label="Customize"><svg width="10" height="8" viewBox="0 0 10 8" fill="none" stroke="#444"><path d="M0 .5h10M1 2.500h8L5 6.500z" /></svg></QuickButton>
      </QuickBar>

      <Body>
        <NavPane>
          <NavHead>
            <h2>All Access ...</h2>
            <IconButton aria-label="Navigation options"><svg width="16" height="16" viewBox="0 0 16 16"><circle cx="8" cy="8" r="7.300" fill="none" stroke="#444" /><path d="M4.500 6.200h7L8 10.200z" fill="#444" /></svg></IconButton>
            <IconButton aria-label="Collapse pane"><svg width="11" height="11" viewBox="0 0 11 11" fill="none" stroke="#444" strokeWidth="1.300"><path d="M5 1 1 5.500 5 10M10 1 6 5.500l4 4.500" /></svg></IconButton>
          </NavHead>
          <NavSearch>
            <input aria-label="Search objects" placeholder="Search..." />
            <button aria-label="Search"><Lens size={18} color="#3f76b5" w={2} /></button>
          </NavSearch>
          <NavGroup>Tables<DoubleUp /></NavGroup>
          <NavItem href="#tblCampingTrip"><TableGlyph />tblCampingTrip</NavItem>
          <NavItem href="#tblTripDetails"><TableGlyph />tblTripDetails</NavItem>
          <NavGroup>Forms<DoubleUp /></NavGroup>
          <NavItem href="#frmCampingTrip"><FormGlyph />frmCampingTrip</NavItem>
          <NavItem href="#frmTripDetails" $on><FormGlyph />frmTripDetails</NavItem>
        </NavPane>

        <Main>
          <DocTabs>
            <DocTab $on><FormGlyph /><span>frmCampingTrip</span><button aria-label="Close frmCampingTrip"><Cross size={11} /></button></DocTab>
            <DocTab><TableGlyph /><span>tblTripDetails</span><button aria-label="Close tblTripDetails"><Cross size={11} /></button></DocTab>
            <DocTabsRest />
          </DocTabs>
          <Designer h={66.5} v={66.5} ticks={110}>
            <Section title="Form Header" ticks={3} height={44} header>
              <FormTitle $x={24} $y={4} $w={258} $h={38}>Camping Trip</FormTitle>
            </Section>
            <Section title="Detail" ticks={38} height={579}>
              <Field id="trip" label="CampingTrip_ID" value="CampingTrip_ID" y={29} labelW={136} x={171} w={265} />
              <Field id="location" label="Location" value="Location" y={75} labelW={136} x={171} w={265} combo />
              <Field id="who" label="Who with?" value="WithWhom" y={121} labelW={136} x={171} w={265} combo />
              <FieldLabel as="span" $tight $x={64} $y={174} $w={113} $h={24}>frmTripDetails</FieldLabel>
              <Handle $gray $x={58} $y={167} $w={12} $h={12} />
              <Handle $gray $x={58} $y={187} $w={12} $h={12} />
              <Handle $x={422} $y={190} $w={7} $h={4} />
              <Handle $x={60} $y={384} $w={4} $h={7} />
              <Subform />
            </Section>
            <Section title="Form Footer" ticks={8} grow />
          </Designer>
        </Main>
        <PropertySheet />
      </Body>

      <TaskBar>
        <Start aria-label="Start"><svg width="20" height="20" viewBox="0 0 20 20" fill="#fff"><path d="M0 3l8-1.200V9.500H0zM9 1.600 20 0v9.500H9zM0 10.500h8v7.700L0 17zM9 10.500h11V20L9 18.400z" /></svg></Start>
        <TaskSearch><Lens color="#222" /><input aria-label="Search Windows" placeholder="Type here to search" /></TaskSearch>
        {Object.entries(pictures).map(([name, art]) => (
          <TaskButton key={name} aria-label={name} $running={running.includes(name)} $active={name === 'Access'}>
            <svg width="30" height="30" viewBox="0 0 30 30">{art}</svg>
          </TaskButton>
        ))}
        <Tray>
          <TrayButton aria-label="Hidden icons"><svg width="16" height="10" viewBox="0 0 16 10" fill="none" stroke="#fff" strokeWidth="1.300"><path d="m1 9 7-8 7 8" /></svg></TrayButton>
          <TrayButton aria-label="Security"><svg width="20" height="20" viewBox="0 0 20 20"><path d="M1 3c4-1 5-3 9-3s5 2 9 3v9c0 5-5 8-9 8s-9-3-9-8z" fill="#69a81c" /><path d="m6 10 3 3 5-6" fill="none" stroke="#fff" strokeWidth="2" /></svg></TrayButton>
          <TrayButton aria-label="Battery"><svg width="20" height="14" viewBox="0 0 20 14" fill="none" stroke="#fff"><path d="M6.500 3.500h11v9h-12V8M17.500 6h2v4h-2M3 6v6H6M1 1.500v3h4v-3M1.500 0v2M4.500 0v2" /><path d="M9 5.500h3v5H9z" fill="#fff" /></svg></TrayButton>
          <TrayButton aria-label="Volume"><svg width="21" height="18" viewBox="0 0 21 18" fill="none" stroke="#fff"><path d="M1 6.500h3l4-4v13l-4-4H1zM11 6.500c1.500 1.500 1.500 3.500 0 5M14 4.500c2.500 2.500 2.500 6.500 0 9M17 2.500c3.500 3.500 3.500 9.500 0 13" /></svg></TrayButton>
          <TrayButton aria-label="Network"><svg width="17" height="17" viewBox="0 0 17 17" fill="none" stroke="#ddd" strokeWidth="1.200"><path d="M1 16A15 15 0 0 1 16 1.500M5 16A11 11 0 0 1 16 5.500M9 16a7 7 0 0 1 7-6.500" /><circle cx="14.500" cy="14.500" r="1.500" fill="#fff" /></svg></TrayButton>
          <Clock>{'6:18 PM\n16-Apr-20'}</Clock>
          <NoticeButton aria-label="Notifications"><svg width="20" height="21" viewBox="0 0 20 21" fill="none" stroke="#fff" strokeWidth="1.200"><path d="M1 1h18v15h-6l-3 3.500V16H1z" /></svg></NoticeButton>
          <PeekEdge />
        </Tray>
      </TaskBar>
    </Shell>
  );
}
